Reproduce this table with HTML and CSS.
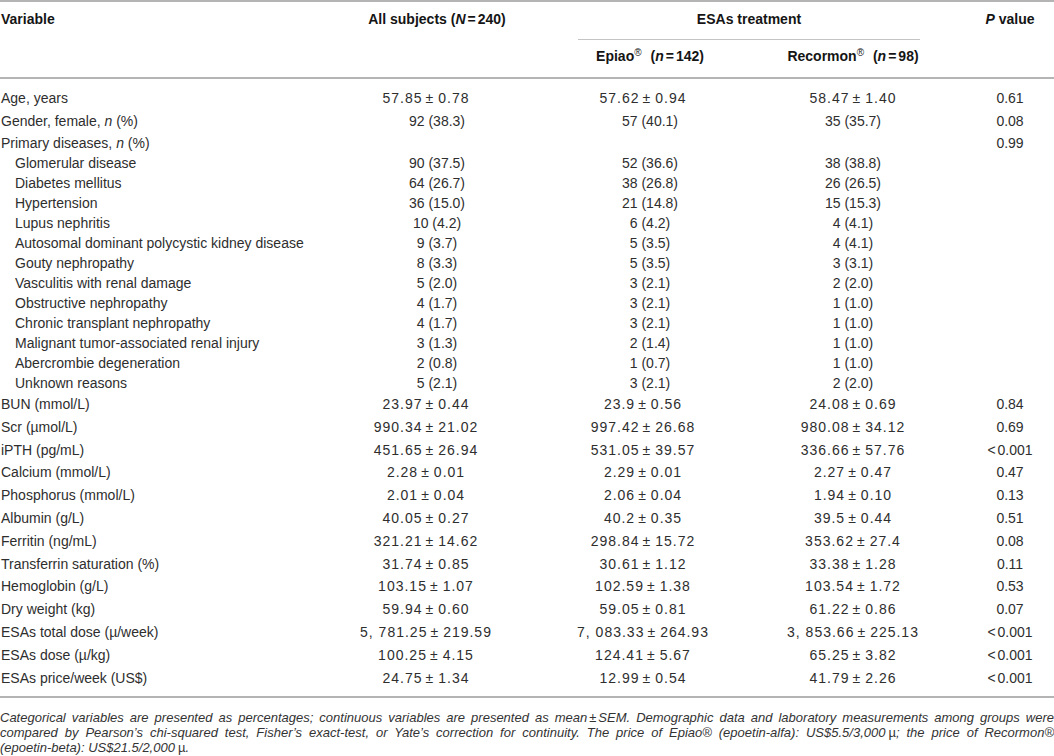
FILE: index.html
```html
<!DOCTYPE html>
<html>
<head>
<meta charset="utf-8">
<link rel="stylesheet" href="styles.css">
</head>
<body>
<div class="table">
  <div class="thead">
    <div class="h c1 r1">Variable</div>
    <div class="h c2 r1">All subjects (<i>N</i><span class="eq">=</span>240)</div>
    <div class="h c34 r1"><span class="span-line">ESAs treatment</span></div>
    <div class="h c5 r1"><i>P</i> value</div>
    <div class="h c3 r2">Epiao<sup>®</sup> (<i>n</i><span class="eq">=</span>142)</div>
    <div class="h c4 r2">Recormon<sup>®</sup> (<i>n</i><span class="eq">=</span>98)</div>
  </div>
  <div class="tbody">
    <div class="row"><div class="c1">Age, years</div><div class="c2"><span class="m">57.85<b>±</b>0.78</span></div><div class="c3"><span class="m">57.62<b>±</b>0.94</span></div><div class="c4"><span class="m">58.47<b>±</b>1.40</span></div><div class="c5">0.61</div></div>
    <div class="row"><div class="c1">Gender, female, <i>n</i> (%)</div><div class="c2">92 (38.3)</div><div class="c3">57 (40.1)</div><div class="c4">35 (35.7)</div><div class="c5">0.08</div></div>
    <div class="row sub"><div class="c1">Primary diseases, <i>n</i> (%)</div><div class="c2"></div><div class="c3"></div><div class="c4"></div><div class="c5">0.99</div></div>
    <div class="row sub"><div class="c1 ind">Glomerular disease</div><div class="c2">90 (37.5)</div><div class="c3">52 (36.6)</div><div class="c4">38 (38.8)</div><div class="c5"></div></div>
    <div class="row sub"><div class="c1 ind">Diabetes mellitus</div><div class="c2">64 (26.7)</div><div class="c3">38 (26.8)</div><div class="c4">26 (26.5)</div><div class="c5"></div></div>
    <div class="row sub"><div class="c1 ind">Hypertension</div><div class="c2">36 (15.0)</div><div class="c3">21 (14.8)</div><div class="c4">15 (15.3)</div><div class="c5"></div></div>
    <div class="row sub"><div class="c1 ind">Lupus nephritis</div><div class="c2">10 (4.2)</div><div class="c3">6 (4.2)</div><div class="c4">4 (4.1)</div><div class="c5"></div></div>
    <div class="row sub"><div class="c1 ind">Autosomal dominant polycystic kidney disease</div><div class="c2">9 (3.7)</div><div class="c3">5 (3.5)</div><div class="c4">4 (4.1)</div><div class="c5"></div></div>
    <div class="row sub"><div class="c1 ind">Gouty nephropathy</div><div class="c2">8 (3.3)</div><div class="c3">5 (3.5)</div><div class="c4">3 (3.1)</div><div class="c5"></div></div>
    <div class="row sub"><div class="c1 ind">Vasculitis with renal damage</div><div class="c2">5 (2.0)</div><div class="c3">3 (2.1)</div><div class="c4">2 (2.0)</div><div class="c5"></div></div>
    <div class="row sub"><div class="c1 ind">Obstructive nephropathy</div><div class="c2">4 (1.7)</div><div class="c3">3 (2.1)</div><div class="c4">1 (1.0)</div><div class="c5"></div></div>
    <div class="row sub"><div class="c1 ind">Chronic transplant nephropathy</div><div class="c2">4 (1.7)</div><div class="c3">3 (2.1)</div><div class="c4">1 (1.0)</div><div class="c5"></div></div>
    <div class="row sub"><div class="c1 ind">Malignant tumor-associated renal injury</div><div class="c2">3 (1.3)</div><div class="c3">2 (1.4)</div><div class="c4">1 (1.0)</div><div class="c5"></div></div>
    <div class="row sub"><div class="c1 ind">Abercrombie degeneration</div><div class="c2">2 (0.8)</div><div class="c3">1 (0.7)</div><div class="c4">1 (1.0)</div><div class="c5"></div></div>
    <div class="row sub"><div class="c1 ind">Unknown reasons</div><div class="c2">5 (2.1)</div><div class="c3">3 (2.1)</div><div class="c4">2 (2.0)</div><div class="c5"></div></div>
    <div class="row"><div class="c1">BUN (mmol/L)</div><div class="c2"><span class="m">23.97<b>±</b>0.44</span></div><div class="c3"><span class="m">23.9<b>±</b>0.56</span></div><div class="c4"><span class="m">24.08<b>±</b>0.69</span></div><div class="c5">0.84</div></div>
    <div class="row"><div class="c1">Scr (µmol/L)</div><div class="c2"><span class="m">990.34<b>±</b>21.02</span></div><div class="c3"><span class="m">997.42<b>±</b>26.68</span></div><div class="c4"><span class="m">980.08<b>±</b>34.12</span></div><div class="c5">0.69</div></div>
    <div class="row"><div class="c1">iPTH (pg/mL)</div><div class="c2"><span class="m">451.65<b>±</b>26.94</span></div><div class="c3"><span class="m">531.05<b>±</b>39.57</span></div><div class="c4"><span class="m">336.66<b>±</b>57.76</span></div><div class="c5"><span class="lt">&lt;</span>0.001</div></div>
    <div class="row"><div class="c1">Calcium (mmol/L)</div><div class="c2"><span class="m">2.28<b>±</b>0.01</span></div><div class="c3"><span class="m">2.29<b>±</b>0.01</span></div><div class="c4"><span class="m">2.27<b>±</b>0.47</span></div><div class="c5">0.47</div></div>
    <div class="row"><div class="c1">Phosphorus (mmol/L)</div><div class="c2"><span class="m">2.01<b>±</b>0.04</span></div><div class="c3"><span class="m">2.06<b>±</b>0.04</span></div><div class="c4"><span class="m">1.94<b>±</b>0.10</span></div><div class="c5">0.13</div></div>
    <div class="row"><div class="c1">Albumin (g/L)</div><div class="c2"><span class="m">40.05<b>±</b>0.27</span></div><div class="c3"><span class="m">40.2<b>±</b>0.35</span></div><div class="c4"><span class="m">39.5<b>±</b>0.44</span></div><div class="c5">0.51</div></div>
    <div class="row"><div class="c1">Ferritin (ng/mL)</div><div class="c2"><span class="m">321.21<b>±</b>14.62</span></div><div class="c3"><span class="m">298.84<b>±</b>15.72</span></div><div class="c4"><span class="m">353.62<b>±</b>27.4</span></div><div class="c5">0.08</div></div>
    <div class="row"><div class="c1">Transferrin saturation (%)</div><div class="c2"><span class="m">31.74<b>±</b>0.85</span></div><div class="c3"><span class="m">30.61<b>±</b>1.12</span></div><div class="c4"><span class="m">33.38<b>±</b>1.28</span></div><div class="c5">0.11</div></div>
    <div class="row"><div class="c1">Hemoglobin (g/L)</div><div class="c2"><span class="m">103.15<b>±</b>1.07</span></div><div class="c3"><span class="m">102.59<b>±</b>1.38</span></div><div class="c4"><span class="m">103.54<b>±</b>1.72</span></div><div class="c5">0.53</div></div>
    <div class="row"><div class="c1">Dry weight (kg)</div><div class="c2"><span class="m">59.94<b>±</b>0.60</span></div><div class="c3"><span class="m">59.05<b>±</b>0.81</span></div><div class="c4"><span class="m">61.22<b>±</b>0.86</span></div><div class="c5">0.07</div></div>
    <div class="row"><div class="c1">ESAs total dose (µ/week)</div><div class="c2"><span class="m">5, 781.25<b>±</b>219.59</span></div><div class="c3"><span class="m">7, 083.33<b>±</b>264.93</span></div><div class="c4"><span class="m">3, 853.66<b>±</b>225.13</span></div><div class="c5"><span class="lt">&lt;</span>0.001</div></div>
    <div class="row"><div class="c1">ESAs dose (µ/kg)</div><div class="c2"><span class="m">100.25<b>±</b>4.15</span></div><div class="c3"><span class="m">124.41<b>±</b>5.67</span></div><div class="c4"><span class="m">65.25<b>±</b>3.82</span></div><div class="c5"><span class="lt">&lt;</span>0.001</div></div>
    <div class="row"><div class="c1">ESAs price/week (US$)</div><div class="c2"><span class="m">24.75<b>±</b>1.34</span></div><div class="c3"><span class="m">12.99<b>±</b>0.54</span></div><div class="c4"><span class="m">41.79<b>±</b>2.26</span></div><div class="c5"><span class="lt">&lt;</span>0.001</div></div>
  </div>
  <p class="note">Categorical variables are presented as percentages; continuous variables are presented as mean<span class="pm">±</span>SEM. Demographic data and laboratory measurements among groups were compared by Pearson’s chi-squared test, Fisher’s exact-test, or Yate’s correction for continuity. The price of Epiao® (epoetin-alfa): US$5.5/3,000<span class="mu">µ</span>; the price of Recormon® <span class="nw">(epoetin-beta):</span> US$21.5/2,000<span class="mu">µ</span>.</p>
</div>
</body>
</html>
```

FILE: styles.css
```css
html, body {
  margin: 0;
  padding: 0;
  background: #ffffff;
}

body {
  font-family: "Liberation Sans", Arial, sans-serif;
  font-size: 14px;
  color: #2e2e2e;
}

.table {
  width: 1054px;
}

.thead {
  display: grid;
  grid-template-columns: 330px 214px 212px 194px 104px;
  grid-template-rows: 38px 37px;
  border-top: 2px solid #b4b4b4;
  border-bottom: 2px solid #b4b4b4;
}

.h {
  font-weight: bold;
  color: #151515;
  line-height: 16px;
}

.h i {
  font-style: italic;
}

.h .eq {
  margin: 0 2px;
}

.h sup {
  font-size: 10px;
  vertical-align: 5px;
  line-height: 0;
  margin-right: 5px;
  font-weight: normal;
}

.r1 {
  grid-row: 1;
  padding-top: 9px;
}

.r2 {
  grid-row: 2;
  padding-top: 8px;
}

.thead .c1 {
  grid-column: 1;
  padding-left: 1px;
}

.thead .c2 {
  grid-column: 2;
  text-align: center;
}

.thead .c34 {
  grid-column: 3 / 5;
  margin: 0 30px 0 34px;
  border-bottom: 1px solid #c4c4c4;
  text-align: center;
}

.thead .c3 {
  grid-column: 3;
  text-align: center;
}

.thead .c4 {
  grid-column: 4;
  text-align: center;
}

.thead .c5 {
  grid-column: 5;
  text-align: center;
  padding-left: 16px;
}

.tbody {
  padding: 8px 0 7px;
  border-bottom: 2px solid #b4b4b4;
}

.row {
  display: grid;
  grid-template-columns: 330px 214px 212px 194px 104px;
  height: 22.8px;
  align-items: center;
  line-height: 16px;
}

.row.sub {
  height: 20px;
}

.row .c1 {
  padding-left: 1px;
  white-space: nowrap;
}

.row .c1.ind {
  padding-left: 15px;
}

.row .c2,
.row .c3,
.row .c4 {
  text-align: center;
  white-space: nowrap;
}

.row .c5 {
  text-align: center;
  padding-left: 16px;
}

.lt {
  margin-right: 2px;
}

.m {
  letter-spacing: 1px;
}

.m b {
  font-weight: normal;
  margin: 0 4px 0 3px;
}

.row .c2 .m {
  margin-right: 22px;
}

.row .c3 .m {
  margin-right: 14px;
}

.note {
  margin: 0;
  padding-top: 12px;
  font-size: 13px;
  line-height: 15px;
  font-style: italic;
  text-align: justify;
  color: #333333;
}

.note .nw {
  white-space: nowrap;
}

.note .pm {
  font-style: normal;
  margin: 0 2px;
}

.note .mu {
  font-style: normal;
  margin-left: 3px;
}
```
